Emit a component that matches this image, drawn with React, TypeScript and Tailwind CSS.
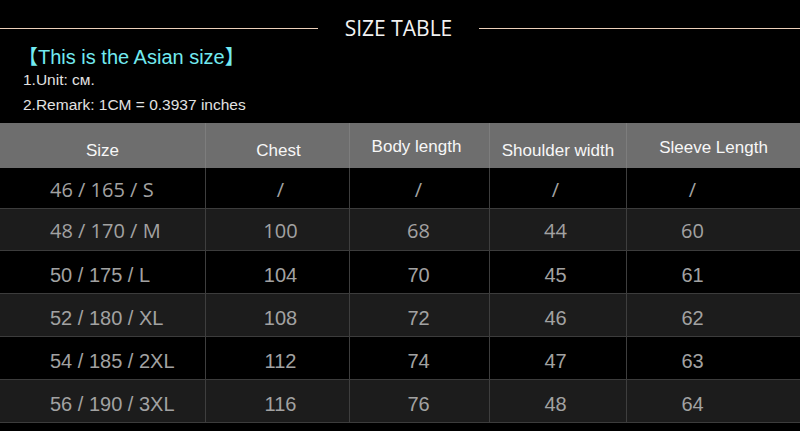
const columns = [
	{ label: "Size", head: "pt-[10px]", cell: "justify-start pl-[50px]" },
	{ label: "Chest", head: "pt-[10px] pl-[2px]", cell: "justify-center pl-[6px]" },
	{ label: "Body length", head: "pt-[3px] pr-[6px]", cell: "justify-center pr-[2px]" },
	{ label: "Shoulder width", head: "pt-[10px]", cell: "justify-center pr-[5px]" },
	{ label: "Sleeve Length", head: "pt-[4px]", cell: "justify-center pr-[42px]" },
];

const rows = [
	{ h: "h-[41px]", bg: "bg-black", open: true, cells: ["46 / 165 / S", "/", "/", "/", "/"] },
	{ h: "h-[42px]", bg: "bg-[#1c1c1c]", open: true, cells: ["48 / 170 / M", "100", "68", "44", "60"] },
	{ h: "h-[43px]", bg: "bg-black", open: false, cells: ["50 / 175 / L", "104", "70", "45", "61"] },
	{ h: "h-[43px]", bg: "bg-[#1c1c1c]", open: false, cells: ["52 / 180 / XL", "108", "72", "46", "62"] },
	{ h: "h-[43px]", bg: "bg-black", open: false, cells: ["54 / 185 / 2XL", "112", "74", "47", "63"] },
	{ h: "h-[43px]", bg: "bg-[#1c1c1c]", open: false, cells: ["56 / 190 / 3XL", "116", "76", "48", "64"] },
];

const grid = "grid grid-cols-[205px_144px_140px_137px_174px]";

export default function App() {
	return (
		<div className="h-[431px] w-[800px] overflow-hidden bg-black font-['Liberation_Sans',Arial,sans-serif]">
			<div className="mt-[17px] flex h-[22px] items-center">
				<div className="h-px w-[318px] bg-[#ecd0ba]" />
				<h1 className="flex-1 text-center font-['Open_Sans',sans-serif] text-[21px] leading-[22px] text-[#f2f2f2]">
					SIZE TABLE
				</h1>
				<div className="h-px w-[321px] bg-[#ecd0ba]" />
			</div>

			<div className="pl-[23px]">
				<p className="mt-[7px] -ml-[5px] text-[20px] leading-[23px] text-[#72eaf0] font-['Liberation_Sans','Noto_Sans_CJK_SC',sans-serif]">
					【This is the Asian size】
				</p>
				<p className="mt-[2px] text-[15.5px] leading-[17px] text-[#e2e2e2]">
					1.Unit: cм.
				</p>
				<p className="mt-[8px] text-[15.5px] leading-[17px] text-[#e2e2e2]">
					2.Remark: 1CM = 0.3937 inches
				</p>
			</div>

			<div className="mt-[10px]">
				<div className={`${grid} h-[45px] bg-[#6e6e6e]`}>
					{columns.map((col, i) => (
						<div
							key={col.label}
							className={`flex items-center justify-center text-[17px] text-[#f7f7f7] ${col.head} ${i > 0 ? "border-l border-[#7d7d7d]" : ""}`}
						>
							{col.label}
						</div>
					))}
				</div>

				{rows.map((row) => (
					<div
						key={row.cells[0]}
						className={`${grid} ${row.h} ${row.bg} border-b border-[#3c3c3c]`}
					>
						{row.cells.map((value, i) => (
							<div
								key={columns[i].label}
								className={`flex items-center text-[20px] text-[#a2a2a2] ${columns[i].cell} ${row.open ? "pt-[3px] font-['Open_Sans',sans-serif]" : "pt-[5px]"} ${i > 0 ? "border-l border-[#3e3e3e]" : ""}`}
							>
								{value}
							</div>
						))}
					</div>
				))}
			</div>
		</div>
	);
}
